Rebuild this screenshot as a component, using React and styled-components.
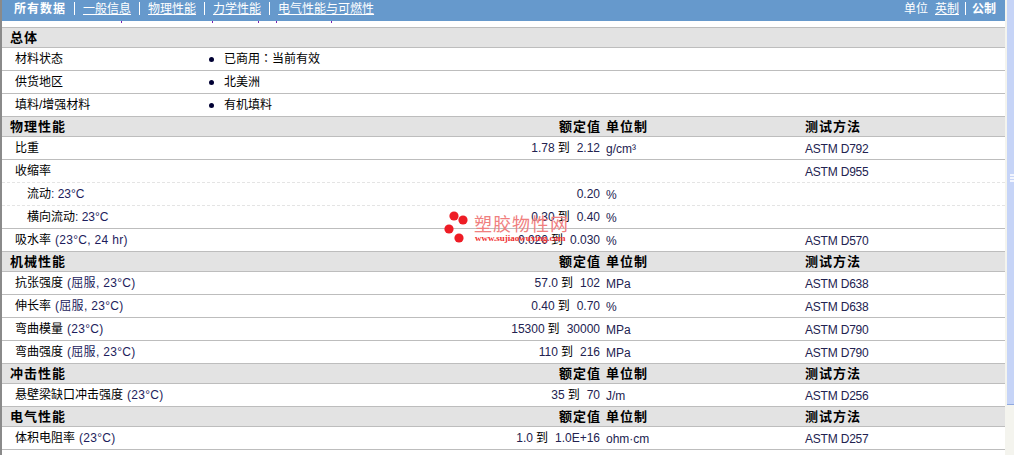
import React from 'react';
import styled, { createGlobalStyle } from 'styled-components';

const GlobalStyle = createGlobalStyle`
  html, body {
    margin: 0;
    padding: 0;
    height: 100%;
    overflow: hidden;
    background: #fff;
  }
`;

const Page = styled.div`
  width: 1014px;
  height: 455px;
  position: relative;
  display: flex;
  overflow: hidden;
  font-family: "Liberation Sans", "Noto Sans CJK SC", sans-serif;
  font-size: 12px;
  line-height: 14px;
  color: #000;
`;

const Main = styled.div`
  width: 1005px;
  height: 455px;
  box-sizing: border-box;
  border-left: 2px solid #8a8a8a;
  overflow: hidden;
`;

const Scrollbar = styled.div`
  width: 9px;
  height: 455px;
  box-sizing: border-box;
  padding-left: 2px;
  background: #f4f4ee;
`;

const Thumb = styled.div`
  height: 405px;
  box-sizing: border-box;
  background: #c6d4f7;
  border-bottom: 1px solid #8fa8e0;
  display: flex;
  flex-direction: column;
  align-items: flex-end;
  gap: 1px;
  padding-top: 174px;
`;

const Grip = styled.span`
  width: 4px;
  height: 2px;
  background: #f2f5fe;
`;

const TopBar = styled.div`
  height: 21px;
  background: #6699cc;
  color: #fff;
  display: flex;
  align-items: center;
  justify-content: space-between;
  padding: 0 9px 4px 12px;
  box-sizing: border-box;
`;

const NavGroup = styled.div`
  display: flex;
  align-items: center;
`;

const NavItem = styled.a`
  color: #fff;
  font-weight: ${({ $active }) => ($active ? 700 : 400)};
  text-decoration: ${({ $active }) => ($active ? 'none' : 'underline')};
  text-underline-offset: 1px;
`;

const LeadItem = styled(NavItem)`
  letter-spacing: 1px;
`;

const NavSep = styled.span`
  width: 1px;
  height: 13px;
  background: #fff;
  margin: 0 ${({ $gap }) => $gap || 8}px;
`;

const UnitLabel = styled.span`
  margin-right: 7px;
`;

const Gap = styled.div`
  height: 6px;
  background: #fff;
`;

const Tick = styled.span`
  position: absolute;
  top: 21px;
  left: ${({ $x }) => $x}px;
  width: 1px;
  height: 2px;
  background: #7a1fb0;
`;

const COLS = '460px 125px 205px 1fr';

const Section = styled.div`
  height: 20px;
  box-sizing: border-box;
  border-top: 1px solid #bdbdbd;
  background: #e3e3e3;
  display: grid;
  grid-template-columns: 8px 465px 125px 205px 1fr;
  align-items: center;
  font-weight: 700;
  font-size: 13px;
  letter-spacing: 1px;
`;

const SectionTitle = styled.div`
  grid-column: 2;
`;

const HeadValue = styled.div`
  grid-column: 3;
  text-align: right;
  margin-right: -1px;
`;

const HeadUnit = styled.div`
  grid-column: 4;
  padding-left: 6px;
`;

const HeadMethod = styled.div`
  grid-column: 5;
`;

const Row = styled.div`
  height: 23px;
  box-sizing: border-box;
  border-top: ${({ $dashed }) => ($dashed ? '1px dashed #e4e4e4' : '1px solid #bdbdbd')};
  background: #fff;
  display: grid;
  grid-template-columns: 13px ${COLS};
  align-items: center;
`;

const Name = styled.div`
  grid-column: 2;
  padding-left: ${({ $indent }) => ($indent ? 12 : 0)}px;
  padding-bottom: 1px;
  white-space: nowrap;
`;

const Cond = styled.span`
  color: #1c1c5c;
  margin-left: ${({ $tight }) => ($tight ? 0 : 4)}px;
  letter-spacing: ${({ $tight }) => ($tight ? 0 : 0.3)}px;
`;

const Value = styled.div`
  grid-column: 3;
  text-align: right;
  white-space: nowrap;
  color: #222250;
  padding-bottom: 1px;
`;

const To = styled.span`
  color: #000;
  margin: 0 7px 0 3px;
`;

const Unit = styled.div`
  grid-column: 4;
  padding-left: 6px;
  padding-top: 1px;
  color: #222250;
`;

const Method = styled.div`
  grid-column: 5;
  padding-top: 1px;
  letter-spacing: -0.2px;
  color: #222250;
`;

const InfoRow = styled.div`
  height: 23px;
  box-sizing: border-box;
  border-top: 1px solid #bdbdbd;
  background: #fff;
  display: grid;
  grid-template-columns: 13px 194px 15px 1fr;
  align-items: center;
`;

const Bullet = styled.span`
  grid-column: 3;
  width: 5px;
  height: 5px;
  border-radius: 50%;
  background: #000033;
`;

const InfoValue = styled.div`
  grid-column: 4;
  padding-bottom: 1px;
`;

const Colon = styled.span`
  font-family: "Noto Sans CJK TC", sans-serif;
`;

const EndLine = styled.div`
  border-top: 1px solid #bdbdbd;
`;

const Watermark = styled.div`
  position: absolute;
  left: 444px;
  top: 209px;
  width: 130px;
  height: 36px;
  pointer-events: none;
`;

const WatermarkTitle = styled.div`
  position: absolute;
  left: 30px;
  top: 6px;
  font-size: 18px;
  letter-spacing: 1px;
  line-height: 20px;
  color: #f07f7f;
  white-space: nowrap;
`;

const WatermarkUrl = styled.div`
  position: absolute;
  left: 31px;
  top: 24px;
  font-family: "Liberation Serif", serif;
  font-size: 9px;
  font-weight: 700;
  line-height: 10px;
  color: #f03030;
  white-space: nowrap;
`;

const Dots = styled.svg`
  position: absolute;
  left: 0;
  top: 0;
`;

const general = [
  ['材料状态', <>已商用<Colon>：</Colon>当前有效</>],
  ['供货地区', '北美洲'],
  ['填料/增强材料', '有机填料'],
];

const ticks = [121, 212, 258, 276, 331];

const sections = [
  {
    title: '物理性能',
    rows: [
      { name: '比重', low: '1.78', high: '2.12', unit: 'g/cm³', method: 'ASTM D792' },
      { name: '收缩率', method: 'ASTM D955' },
      { name: '流动', cond: ': 23°C', indent: true, dashed: true, single: '0.20', unit: '%' },
      { name: '横向流动', cond: ': 23°C', indent: true, dashed: true, low: '0.30', high: '0.40', unit: '%' },
      { name: '吸水率', cond: '(23°C, 24 hr)', low: '0.020', high: '0.030', unit: '%', method: 'ASTM D570' },
    ],
  },
  {
    title: '机械性能',
    rows: [
      { name: '抗张强度', cond: '(屈服, 23°C)', low: '57.0', high: '102', unit: 'MPa', method: 'ASTM D638' },
      { name: '伸长率', cond: '(屈服, 23°C)', low: '0.40', high: '0.70', unit: '%', method: 'ASTM D638' },
      { name: '弯曲模量', cond: '(23°C)', low: '15300', high: '30000', unit: 'MPa', method: 'ASTM D790' },
      { name: '弯曲强度', cond: '(屈服, 23°C)', low: '110', high: '216', unit: 'MPa', method: 'ASTM D790' },
    ],
  },
  {
    title: '冲击性能',
    rows: [
      { name: '悬壁梁缺口冲击强度', cond: '(23°C)', low: '35', high: '70', unit: 'J/m', method: 'ASTM D256' },
    ],
  },
  {
    title: '电气性能',
    rows: [
      { name: '体积电阻率', cond: '(23°C)', low: '1.0', high: '1.0E+16', unit: 'ohm·cm', method: 'ASTM D257' },
    ],
  },
];

const App = () => {
  return (
    <Page>
      <GlobalStyle />
      <Main>
        <TopBar>
          <NavGroup>
            <LeadItem $active>所有数据</LeadItem>
            <NavSep />
            <NavItem>一般信息</NavItem>
            <NavSep />
            <NavItem>物理性能</NavItem>
            <NavSep />
            <NavItem>力学性能</NavItem>
            <NavSep />
            <NavItem>电气性能与可燃性</NavItem>
          </NavGroup>
          <NavGroup>
            <UnitLabel>单位</UnitLabel>
            <NavItem>英制</NavItem>
            <NavSep $gap={6} />
            <NavItem $active>公制</NavItem>
          </NavGroup>
        </TopBar>
        <Gap />
        <Section>
          <SectionTitle>总体</SectionTitle>
        </Section>
        {general.map(([name, value]) => (
          <InfoRow key={name}>
            <Name>{name}</Name>
            <Bullet />
            <InfoValue>{value}</InfoValue>
          </InfoRow>
        ))}
        {sections.map((section) => (
          <React.Fragment key={section.title}>
            <Section>
              <SectionTitle>{section.title}</SectionTitle>
              <HeadValue>额定值</HeadValue>
              <HeadUnit>单位制</HeadUnit>
              <HeadMethod>测试方法</HeadMethod>
            </Section>
            {section.rows.map((row) => (
              <Row key={row.name} $dashed={row.dashed}>
                <Name $indent={row.indent}>
                  {row.name}
                  {row.cond && <Cond $tight={row.indent}>{row.cond}</Cond>}
                </Name>
                <Value>
                  {row.single}
                  {row.low && (
                    <>
                      {row.low}
                      <To>到</To>
                      {row.high}
                    </>
                  )}
                </Value>
                <Unit>{row.unit}</Unit>
                <Method>{row.method}</Method>
              </Row>
            ))}
          </React.Fragment>
        ))}
        <EndLine />
      </Main>
      <Scrollbar>
        <Thumb>
          <Grip />
          <Grip />
          <Grip />
        </Thumb>
      </Scrollbar>
      {ticks.map((x) => (
        <Tick key={x} $x={x} />
      ))}
      <Watermark>
        <Dots width="30" height="36" viewBox="0 0 30 36">
          <circle cx="10" cy="7" r="4.6" fill="#ee1c25" />
          <circle cx="19" cy="11" r="4.6" fill="#ee1c25" />
          <circle cx="5" cy="20" r="4.6" fill="#ee1c25" />
          <circle cx="15" cy="29" r="4.6" fill="#ee1c25" />
        </Dots>
        <WatermarkTitle>塑胶物性网</WatermarkTitle>
        <WatermarkUrl>www.sujiaowuxing.com</WatermarkUrl>
      </Watermark>
    </Page>
  );
};

export default App;
